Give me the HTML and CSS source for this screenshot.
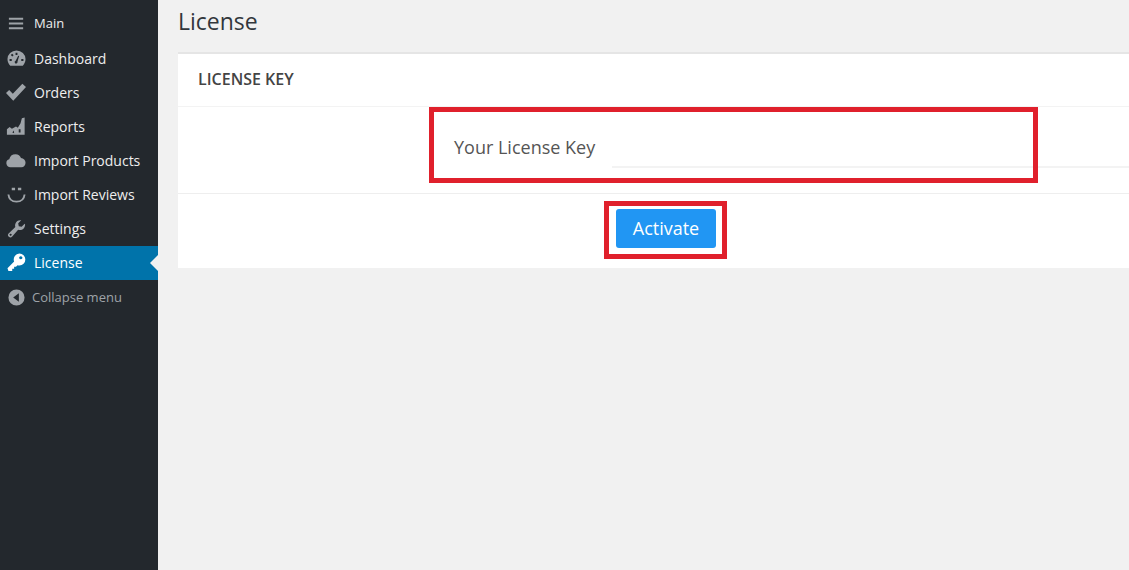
FILE: index.html
```html
<!DOCTYPE html>
<html lang="en">
  <head>
    <meta charset="UTF-8" />
    <title>License</title>
    <link rel="stylesheet" href="styles.css">
  </head>
  <body>
    <aside class="sidebar">
      <div class="menu-item menu-main">
        <svg class="icon" viewBox="0 0 20 20"><path d="M2 4h15v2H2zM2 9h15v2H2zM2 14h15v2H2z"/></svg>
        <span>Main</span>
      </div>
      <div class="menu-item">
        <svg class="icon" viewBox="0 0 20 20"><path fill-rule="evenodd" d="M10 1.500a9.500 9 0 0 0-9.500 9c0 2.800 1 5 2.900 7h13.200c1.900-2 2.900-4.200 2.900-7A9.500 9 0 0 0 10 1.500zM9 4h2v2.200H9zM4 6.300l1.500-1.400 1.500 1.600-1.500 1.400zM2.700 10.500H5v2H2.700zM15 10.500h2.300v2H15zM8.500 15a1.700 1.700 0 0 1 .6-2.600L11.800 7l1 .4-1.700 5.800a1.700 1.700 0 0 1-2.600 1.800z"/></svg>
        <span>Dashboard</span>
      </div>
      <div class="menu-item">
        <svg class="icon icon-wide" viewBox="0 0 22 20"><path d="M0 10.500l3.500-3.200 4 4L18 .5 22 4 8 19z"/></svg>
        <span>Orders</span>
      </div>
      <div class="menu-item">
        <svg class="icon icon-wide" viewBox="0 0 22 20"><path fill-rule="evenodd" d="M1 19v-6l3-2.500 2.500 2L11 10l2 1.500 3-5 1-4 .5-1.500 3-1v19zM8.500 14.500L7 16.500l2 1zM14 13v3.500h2V13z"/></svg>
        <span>Reports</span>
      </div>
      <div class="menu-item">
        <svg class="icon icon-wide" viewBox="0 0 22 20"><path d="M5 17.500a4.500 4.500 0 0 1-1.400-8.800A7 7 0 0 1 10.500 3a6.500 6.500 0 0 1 6 4.300A5.200 5.200 0 0 1 21.500 12.500c0 2.800-2 5-4.500 5z"/></svg>
        <span>Import Products</span>
      </div>
      <div class="menu-item">
        <svg class="icon" viewBox="0 0 20 20"><path d="M5 3h3.500v2.500H5zM11.500 3H15v2.500h-3.500z"/><path class="smile" d="M1.500 10c.5 5 4 7.500 8.500 7.500s8-2.500 8.500-7.500"/></svg>
        <span>Import Reviews</span>
      </div>
      <div class="menu-item">
        <svg class="icon" viewBox="0 0 20 20"><path fill-rule="evenodd" d="M19 5.500a5.500 5.500 0 0 1-7.300 5.800L5.500 18.500a2.400 2.400 0 0 1-3.800-3.300L8.800 8.500A5.500 5.500 0 0 1 15 1.300L11.800 4.500l.6 3 3 .6 3.200-3.200zM3.800 15.500a1 1 0 1 0 .01 0z"/></svg>
        <span>Settings</span>
      </div>
      <div class="menu-item menu-active">
        <svg class="icon" viewBox="0 0 20 20"><path fill-rule="evenodd" d="M13 .5a6.300 6.300 0 0 1 0 12.600c-.7 0-1.300-.1-1.900-.3L9.500 14.500H7.500v2h-2v2.500H1.500L.5 16l7-7A6.300 6.300 0 0 1 13 .5zM14.500 3.300a1.700 1.700 0 1 0 .01 0z"/></svg>
        <span>License</span>
      </div>
      <div class="menu-item menu-collapse">
        <svg class="icon" viewBox="0 0 20 20"><path fill-rule="evenodd" d="M10 1.500a8.500 8.500 0 1 1 0 17 8.500 8.500 0 0 1 0-17zM12.500 5.500L6.500 10l6 4.500z"/></svg>
        <span>Collapse menu</span>
      </div>
    </aside>

    <main class="content">
      <h1 class="page-title">License</h1>
      <section class="card">
        <div class="card-header">LICENSE KEY</div>
        <form class="card-body">
          <label class="key-label" for="license-key">Your License Key</label>
          <input class="key-input" id="license-key" type="text" />
        </form>
        <div class="card-footer">
          <button class="btn-activate" type="button">Activate</button>
        </div>
        <div class="mark mark-field"></div>
        <div class="mark mark-button"></div>
      </section>
    </main>
  </body>
</html>
```

FILE: styles.css
```css
* {
  box-sizing: border-box;
}
html,
body {
  height: 100%;
}
body {
  margin: 0;
  display: flex;
  overflow: hidden;
  background-color: #f1f1f1;
  font-family: "Open Sans", sans-serif;
  color: #333;
}

.sidebar {
  flex: 0 0 158px;
  padding-top: 6px;
  background-color: #23282d;
}
.menu-item {
  position: relative;
  display: flex;
  align-items: center;
  gap: 8px;
  height: 34px;
  padding-left: 7px;
  padding-bottom: 2px;
  font-size: 14px;
  color: #eeeeee;
}
.icon {
  flex: 0 0 19px;
  width: 19px;
  height: 19px;
  fill: #9ea3a8;
}
.icon-wide {
  margin-left: -1px;
  flex-basis: 20px;
  width: 20px;
}
.smile {
  fill: none;
  stroke: #9ea3a8;
  stroke-width: 2;
}
.menu-main {
  margin-bottom: 2px;
  padding-bottom: 0;
  font-size: 13px;
}
.menu-active {
  background-color: #0073aa;
  color: #fff;
}
.menu-active .icon {
  fill: #fff;
}
.menu-active::after {
  content: "";
  position: absolute;
  right: 0;
  top: 9px;
  border: 8px solid transparent;
  border-right-color: #f1f1f1;
  border-left-width: 0;
}
.menu-collapse {
  padding-bottom: 0;
  gap: 6px;
  font-size: 13px;
  color: #9ea3a8;
}

.content {
  flex: 1;
  padding-left: 20px;
  min-width: 0;
}
.page-title {
  margin: 0;
  height: 52px;
  padding-top: 5px;
  font-size: 23px;
  line-height: 32px;
  font-weight: 400;
  color: #32373c;
}
.card {
  position: relative;
  height: 216px;
  border-top: 2px solid #e5e5e5;
  background-color: #fff;
}
.card-header {
  height: 53px;
  padding: 15px 20px 0;
  border-bottom: 1px solid #f3f3f3;
  font-size: 16px;
  line-height: 20px;
  font-weight: 600;
  color: #444;
}
.card-body {
  display: flex;
  height: 87px;
  padding: 25px 0 0 276px;
  border-bottom: 1px solid #eeeeee;
}
.key-label {
  flex: 0 0 158px;
  font-size: 18px;
  line-height: 30px;
  color: #555;
}
.key-input {
  flex: 1;
  height: 36px;
  border: 0;
  border-bottom: 2px solid #f3f3f3;
  background: transparent;
}
.card-footer {
  padding: 15px 0 0 438px;
}
.btn-activate {
  display: block;
  width: 100px;
  height: 39px;
  padding: 0 0 2px;
  border: 0;
  border-radius: 3px;
  background-color: #2196f3;
  font-family: inherit;
  font-size: 18px;
  font-weight: 500;
  color: #fff;
}

/* red annotation boxes drawn over the card */
.mark {
  position: absolute;
  border: 5px solid #e0202c;
}
.mark-field {
  left: 251px;
  top: 53px;
  width: 609px;
  height: 76px;
}
.mark-button {
  left: 426px;
  top: 147px;
  width: 123px;
  height: 58px;
}
```
